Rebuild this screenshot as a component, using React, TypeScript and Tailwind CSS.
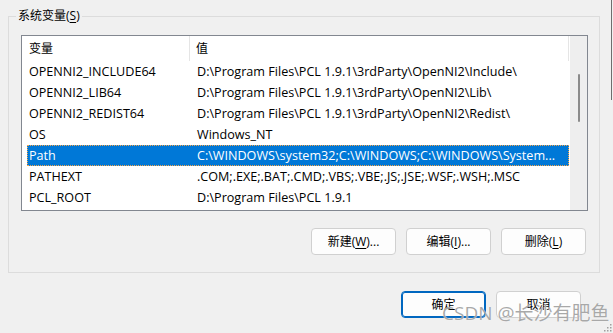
import React from "react";

const rows = [
  { name: "OPENNI2_INCLUDE64", value: "D:\\Program Files\\PCL 1.9.1\\3rdParty\\OpenNI2\\Include\\" },
  { name: "OPENNI2_LIB64", value: "D:\\Program Files\\PCL 1.9.1\\3rdParty\\OpenNI2\\Lib\\" },
  { name: "OPENNI2_REDIST64", value: "D:\\Program Files\\PCL 1.9.1\\3rdParty\\OpenNI2\\Redist\\" },
  { name: "OS", value: "Windows_NT" },
  { name: "Path", value: "C:\\WINDOWS\\system32;C:\\WINDOWS;C:\\WINDOWS\\System...", selected: true },
  { name: "PATHEXT", value: ".COM;.EXE;.BAT;.CMD;.VBS;.VBE;.JS;.JSE;.WSF;.WSH;.MSC" },
  { name: "PCL_ROOT", value: "D:\\Program Files\\PCL 1.9.1" },
];

const Btn = ({ children, primary }: { children: React.ReactNode; primary?: boolean }) => (
  <div
    className={`w-[85px] h-[27px] rounded-[4px] flex items-center justify-center bg-[#fdfdfd] text-black ${
      primary ? "border border-[#0067c0] shadow-[inset_0_0_0_1px_#0067c0]" : "border border-[#d0d0d0]"
    }`}
  >
    {children}
  </div>
);

export default function App() {
  return (
    <div className="relative w-[613px] h-[333px] overflow-hidden bg-[#f0f0f0] pl-[8px] pt-[16px] text-[12px] text-black font-['Open_Sans','Noto_Sans_CJK_SC',sans-serif]">
      {/* group box */}
      <div className="relative w-[592px] h-[257px] border border-[#dcdcdc] px-[12px] pt-[18px]">
        <span className="absolute left-[7px] top-[-10px] px-[2px] bg-[#f0f0f0] leading-[18px]">
          系统变量(<span className="underline underline-offset-2">S</span>)
        </span>

        {/* list view */}
        <div className="w-[567px] h-[176px] border border-[#828790] bg-white flex text-[12.6px]">
          <div className="flex-1 pl-[5px]">
            <div className="flex h-[25px] items-center text-[12px]">
              <div className="w-[163px] h-full flex items-center pl-[2px] border-r border-[#e5e5e5]">变量</div>
              <div className="flex-1 h-full flex items-center pl-[6px] border-r border-[#e5e5e5]">值</div>
            </div>
            {rows.map((r) => (
              <div
                key={r.name}
                className={`flex h-[21px] pt-[2px] items-center whitespace-nowrap ${
                  r.selected ? "bg-[#0078d7] text-white outline outline-1 outline-dotted outline-[#f5a54a] -outline-offset-1" : ""
                }`}
              >
                <div className="w-[164px] pl-[2px]">{r.name}</div>
                <div className="flex-1 pl-[6px]">{r.value}</div>
              </div>
            ))}
          </div>
          {/* scrollbar */}
          <div className="w-[17px] ml-[1px] bg-[#eeeeee] pt-[38px] flex justify-center">
            <div className="w-[2px] h-[48px] rounded-full bg-[#8b8b8b]" />
          </div>
        </div>

        <div className="flex justify-end gap-[10px] mt-[17px] pr-[1px]">
          <Btn>
            新建(<span className="underline underline-offset-2">W</span>)...
          </Btn>
          <Btn>
            编辑(<span className="underline underline-offset-2">I</span>)...
          </Btn>
          <Btn>
            删除(<span className="underline underline-offset-2">L</span>)
          </Btn>
        </div>
      </div>

      <div className="flex justify-end gap-[10px] mt-[18px] pr-[32px]">
        <Btn primary>确定</Btn>
        <Btn>取消</Btn>
      </div>

      {/* window edge */}
      <div className="absolute right-[1px] top-0 w-px h-[100px] bg-[#6e6e6e]" />

      {/* watermark */}
      <div className="absolute left-[442px] top-[302px] text-[19px] leading-[22px] text-[#8c8c8c]/75 whitespace-nowrap [text-shadow:0_0_1px_#ffffff]">
        CSDN @长沙有肥鱼
      </div>

      {/* resize grip */}
      <svg className="absolute right-[1px] bottom-[1px]" width="10" height="10" viewBox="0 0 10 10">
        {[
          [8, 2],
          [5, 5],
          [8, 5],
          [2, 8],
          [5, 8],
          [8, 8],
        ].map(([x, y]) => (
          <rect key={`${x}-${y}`} x={x} y={y} width="1.5" height="1.5" fill="#a0a0a0" />
        ))}
      </svg>
    </div>
  );
}
